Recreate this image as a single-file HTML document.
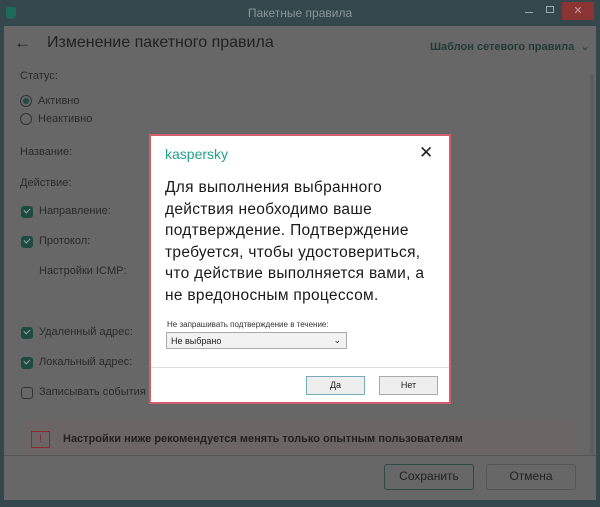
<!DOCTYPE html>
<html><head><meta charset="utf-8"><style>
*{margin:0;padding:0;box-sizing:border-box}
body{width:600px;height:507px;overflow:hidden;background:#34474c;font-family:"Liberation Sans","Noto Sans CJK SC",sans-serif;position:relative}
.a{position:absolute}
.t{color:#2a2a2a;font-size:11px}
.cb{position:absolute;width:12px;height:12px;border-radius:3px;background:#1f4a40}
.cb:after{content:"";position:absolute;left:3px;top:2px;width:5px;height:3px;border-left:1.5px solid #9aa;border-bottom:1.5px solid #9aa;transform:rotate(-45deg)}
.rb{position:absolute;width:12px;height:12px;border-radius:50%;border:1px solid #333}
</style></head><body>
<div class="a" style="left:0;top:0;width:600px;height:26px;background:#34474c"></div>
<div class="a" style="left:6px;top:7px;width:10px;height:12px;background:#1d6b5a;border-radius:2px 2px 5px 5px"></div>
<div class="a" style="left:0;top:6px;width:600px;text-align:center;color:#8a9699;font-size:12px">Пакетные правила</div>
<div class="a" style="left:525px;top:12px;width:8px;height:1px;background:#9aa"></div>
<div class="a" style="left:546px;top:6px;width:8px;height:7px;border:1px solid #9aa"></div>
<div class="a" style="left:562px;top:2px;width:32px;height:18px;background:#8a3434;color:#c99;font-size:11px;text-align:center;line-height:18px">✕</div>
<div class="a" style="left:4px;top:26px;width:592px;height:474px;background:#666766"></div>
<div class="a" style="left:590px;top:75px;width:4px;height:380px;background:#5e5e5e"></div>
<div class="a" style="left:14px;top:33px;color:#222;font-size:17px">←</div>
<div class="a" style="left:47px;top:34px;color:#222;font-size:16px">Изменение пакетного правила</div>
<div class="a" style="left:430px;top:40px;color:#233a37;font-size:11px;font-weight:bold">Шаблон сетевого правила &nbsp;<span style="font-weight:normal">⌄</span></div>
<div class="a t" style="left:20px;top:70px">Статус:</div>
<div class="rb" style="left:20px;top:95px"><div style="position:absolute;left:2px;top:2px;width:6px;height:6px;border-radius:50%;background:#1f4a40"></div></div>
<div class="a t" style="left:38px;top:95px">Активно</div>
<div class="rb" style="left:20px;top:113px"></div>
<div class="a t" style="left:38px;top:113px">Неактивно</div>
<div class="a t" style="left:20px;top:146px">Название:</div>
<div class="a t" style="left:20px;top:177px">Действие:</div>
<div class="cb" style="left:21px;top:206px"></div><div class="a t" style="left:39px;top:205px">Направление:</div>
<div class="cb" style="left:21px;top:236px"></div><div class="a t" style="left:39px;top:235px">Протокол:</div>
<div class="a t" style="left:39px;top:265px">Настройки ICMP:</div>
<div class="cb" style="left:21px;top:327px"></div><div class="a t" style="left:39px;top:326px">Удаленный адрес:</div>
<div class="cb" style="left:21px;top:357px"></div><div class="a t" style="left:39px;top:356px">Локальный адрес:</div>
<div class="rb" style="left:21px;top:387px;border-radius:3px"></div><div class="a t" style="left:39px;top:386px">Записывать события</div>
<div class="a" style="left:22px;top:420px;width:554px;height:36px;background:#6b6565"></div>
<div class="a" style="left:31px;top:431px;width:19px;height:17px;border:1.5px solid #8a2a2a;color:#8a2a2a;font-size:11px;text-align:center;line-height:14px">!</div>
<div class="a" style="left:63px;top:433px;color:#222;font-size:11px;font-weight:bold">Настройки ниже рекомендуется менять только опытным пользователям</div>
<div class="a" style="left:4px;top:455px;width:592px;height:1px;background:#555"></div>
<div class="a" style="left:384px;top:464px;width:90px;height:26px;border:1.5px solid #2d4a44;border-radius:3px;color:#222;font-size:12px;text-align:center;line-height:23px">Сохранить</div>
<div class="a" style="left:486px;top:464px;width:90px;height:26px;border:1.5px solid #555;border-radius:3px;color:#222;font-size:12px;text-align:center;line-height:23px">Отмена</div>
<div class="a" style="left:149px;top:134px;width:302px;height:270px;background:#fff;border:2px solid #d0606e"></div>
<div class="a" style="left:165px;top:146px;color:#23a08a;font-size:14px">kaspersky</div>
<div class="a" style="left:419px;top:143px;color:#222;font-size:17px">✕</div>
<div class="a" style="left:165px;top:177px;color:#1a1a1a;font-size:15.5px;line-height:21.6px;width:290px;white-space:nowrap;letter-spacing:0.3px">Для выполнения выбранного<br>действия необходимо ваше<br>подтверждение. Подтверждение<br>требуется, чтобы удостовериться,<br>что действие выполняется вами, а<br>не вредоносным процессом.</div>
<div class="a" style="left:167px;top:320px;color:#333;font-size:8px">Не запрашивать подтверждение в течение:</div>
<div class="a" style="left:166px;top:332px;width:181px;height:17px;border:1px solid #aaa;background:#f2f2f2;color:#222;font-size:9px;padding:3px 4px">Не выбрано<span style="position:absolute;right:5px;top:2px;font-size:9px">⌄</span></div>
<div class="a" style="left:151px;top:367px;width:298px;height:1px;background:#ddd"></div>
<div class="a" style="left:306px;top:376px;width:59px;height:19px;border:1px solid #7ab;background:#eee;font-size:9px;text-align:center;line-height:17px;color:#222">Да</div>
<div class="a" style="left:379px;top:376px;width:59px;height:19px;border:1px solid #aaa;background:#eee;font-size:9px;text-align:center;line-height:17px;color:#222">Нет</div>
</body></html>
